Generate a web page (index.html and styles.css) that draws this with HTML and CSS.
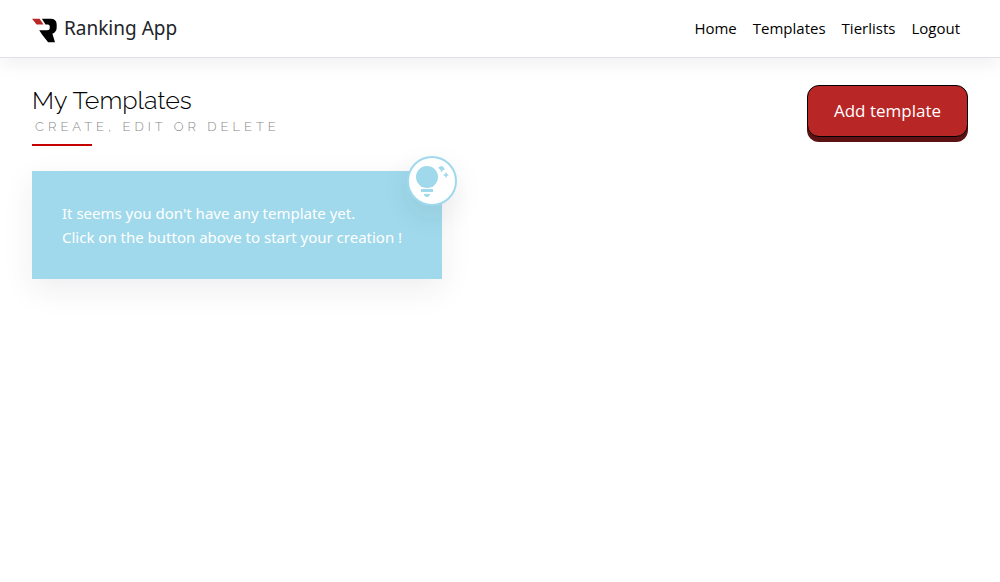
FILE: index.html
```html
<!DOCTYPE html>
<html lang="en">
<head>
<meta charset="utf-8">
<meta name="viewport" content="width=device-width, initial-scale=1">
<title>Ranking App</title>
<link rel="stylesheet" href="styles.css">
</head>
<body>
<header class="navbar">
  <a class="brand" href="#">
    <svg class="logo" viewBox="36 42 76 74" aria-hidden="true">
      <path fill="#b92626" d="M36 43H59L71 61H50Z"/>
      <path fill="#000" d="M66 43H92Q111 43 111 61V71Q111 84 98 89L106 115H85L67 92L58 78H82Q90 78 90 72V67Q90 61 84 61H77Z"/>
    </svg>
    <span>Ranking App</span>
  </a>
  <nav class="links">
    <a href="#">Home</a>
    <a href="#">Templates</a>
    <a href="#">Tierlists</a>
    <a href="#">Logout</a>
  </nav>
</header>
<main class="page">
  <div class="heading">
    <div class="titles">
      <h1 class="title">My Templates</h1>
      <p class="subtitle">Create, edit or delete</p>
    </div>
    <button class="add" type="button">Add template</button>
  </div>
  <section class="notice">
    <p>It seems you don't have any template yet.<br>Click on the button above to start your creation !</p>
    <span class="badge">
      <svg class="bulb" viewBox="0 0 46 46" aria-hidden="true">
        <circle cx="18" cy="19" r="11"/>
        <path d="M12 27H24V29H12ZM12 31H24V34H12ZM15 36H21V37L19 39H17L15 37ZM29 10Q31 8 33 8Q35 9 36 12Q33 11 33 14H32Q32 11 29 10ZM37 14L38 16L40 17L38 18L37 20L36 18L34 17L36 16Z"/>
      </svg>
    </span>
  </section>
</main>
</body>
</html>
```
FILE: styles.css
```css
* { box-sizing: border-box; }
body {
  min-height: 100vh;
  margin: 0;
  background: #fff;
  color: #000;
  font-family: "Segoe UI", "Open Sans", "Noto Sans", sans-serif;
  font-size: 15px;
  line-height: 24px;
}
a { color: inherit; text-decoration: none; }
h1, p { margin: 0; }
.navbar {
  display: flex;
  align-items: center;
  justify-content: space-between;
  height: 58px;
  padding: 0 40px 2px 32px;
  border-bottom: 1px solid #dee2e6;
  box-shadow: 0 8px 16px rgba(0, 0, 0, 0.05);
}
.brand {
  display: flex;
  align-items: center;
  gap: 7px;
  color: #212529;
  font-family: "Segoe UI", "Noto Sans", sans-serif;
  font-size: 19px;
}
.logo { width: 25px; height: 25px; margin-top: 6px; }
.links { display: flex; gap: 16px; }
.page { padding: 27px 32px; }
.heading {
  display: flex;
  justify-content: space-between;
  align-items: flex-start;
}
.titles::after {
  content: "";
  display: block;
  width: 60px;
  height: 2px;
  margin-top: 6px;
  background: #c50000;
}
.title {
  font-family: Raleway, Lato, sans-serif;
  font-size: 25px;
  font-weight: 300;
  line-height: 30px;
}
.subtitle {
  padding-left: 3px;
  color: #888;
  font-family: Raleway, Lato, sans-serif;
  font-size: 13px;
  font-weight: 300;
  line-height: 23px;
  letter-spacing: 4px;
  text-transform: uppercase;
}
.add {
  height: 52px;
  padding: 0 26px;
  border: 1px solid #000;
  border-radius: 12px;
  background: #b92626;
  box-shadow: 0 5px #5c1212;
  color: #fff;
  font: inherit;
  font-size: 17px;
}
.notice {
  position: relative;
  width: fit-content;
  margin-top: 25px;
  padding: 30px 40px 30px 30px;
  background: #9fd9eb;
  box-shadow: 0 10px 30px rgba(34, 35, 58, 0.08);
  color: #fff;
  font-family: "Segoe UI", "Noto Sans", sans-serif;
}
.badge {
  position: absolute;
  top: -15px;
  right: -15px;
  width: 50px;
  height: 50px;
  border: 2px solid #9fd9eb;
  border-radius: 50%;
  background: #fff;
  box-shadow: 0 10px 30px rgba(34, 35, 58, 0.08);
}
.bulb { display: block; width: 46px; height: 46px; fill: #9fd9eb; }
```
